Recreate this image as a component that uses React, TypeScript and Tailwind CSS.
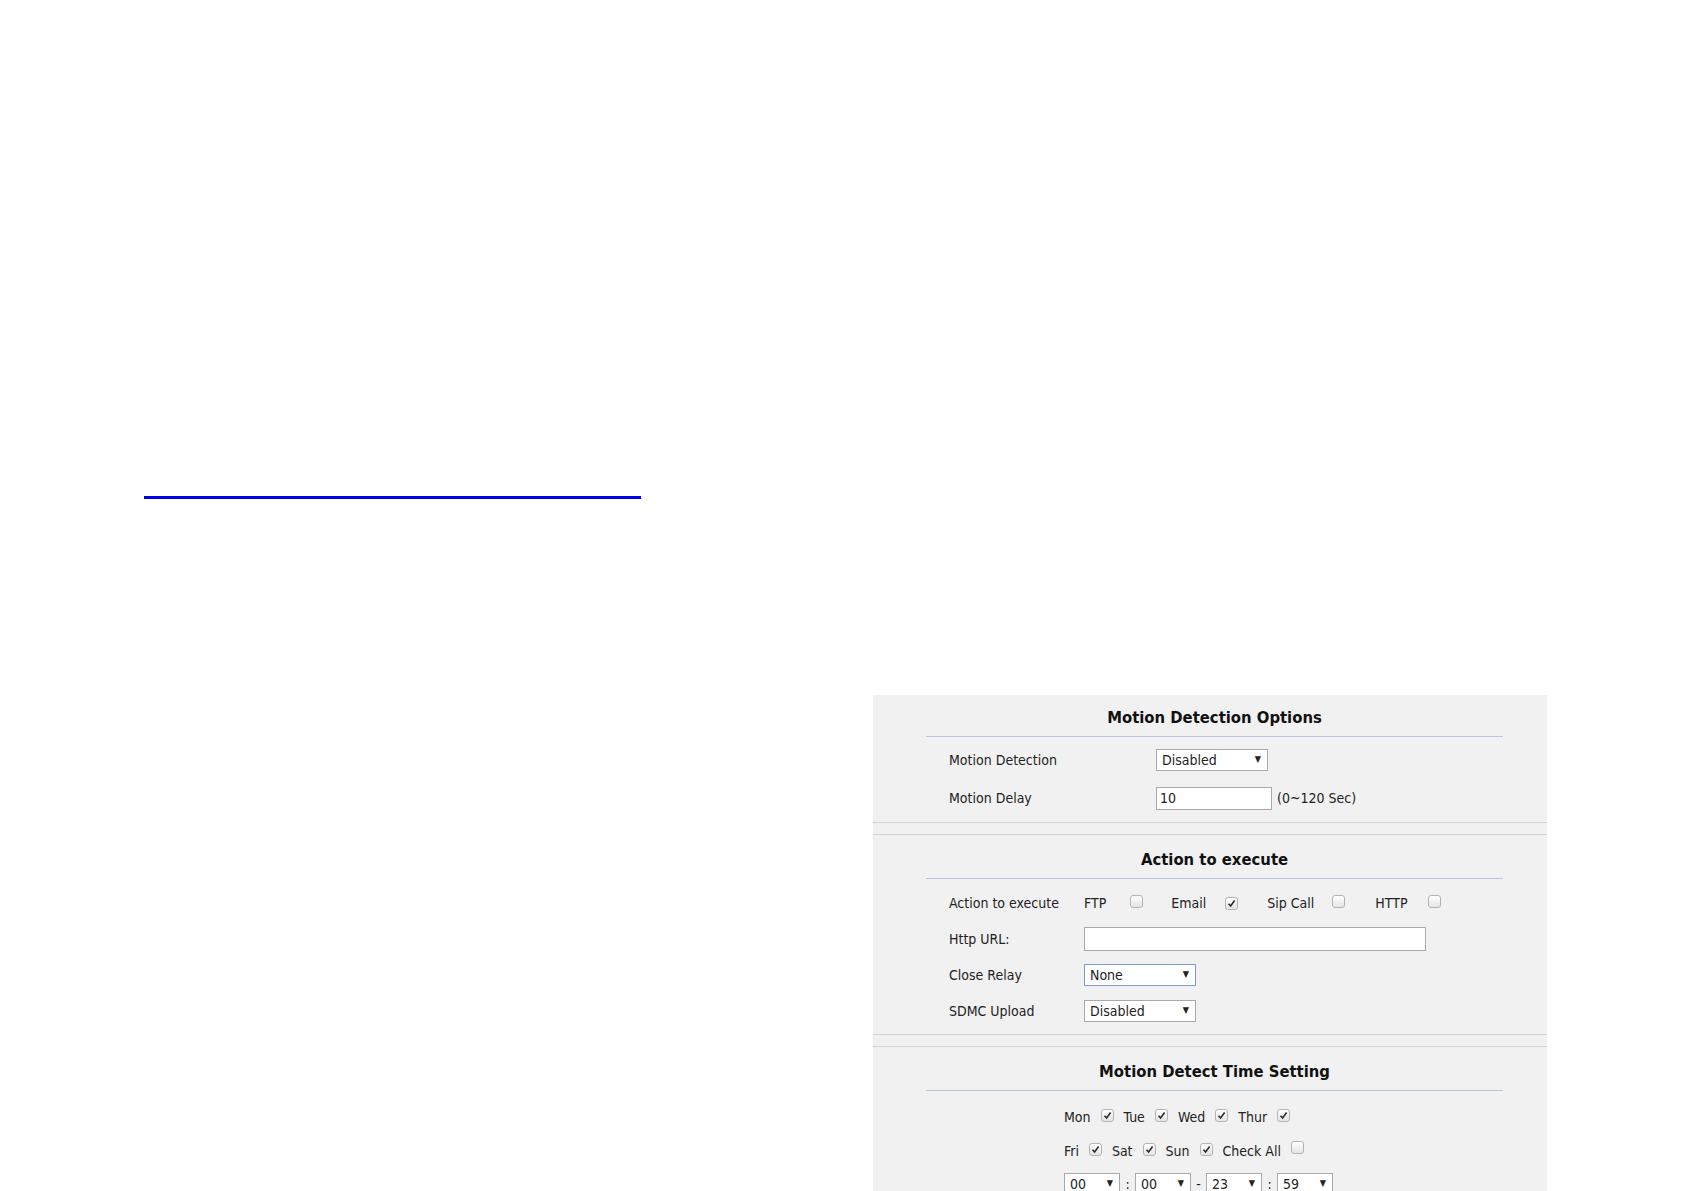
const font = { fontFamily: '"DejaVu Sans Condensed", "Liberation Sans", Arial, sans-serif' }

const Check = ({ checked = false }: { checked?: boolean }) => (
  <span className="inline-flex h-[13px] w-[13px] items-center justify-center rounded-[3px] border border-[#b4b4b4] bg-gradient-to-b from-white to-[#e4e4e4]">
    {checked && (
      <svg width="9" height="9" viewBox="0 0 9 9">
        <path d="M1.5 4.8 L3.6 7 L7.6 1.6" fill="none" stroke="#2b2b2b" strokeWidth="1.6" />
      </svg>
    )}
  </span>
)

const Select = ({ value, width, focus = false }: { value: string; width: string; focus?: boolean }) => (
  <div
    className={`flex h-[22px] items-center justify-between bg-white pl-[5px] pr-[6px] text-[14px] text-[#222] border ${
      focus ? 'border-[#7d9bd0]' : 'border-[#a9a9a9]'
    } ${width}`}
  >
    <span>{value}</span>
    <span className="text-[9px] text-[#222]">▼</span>
  </div>
)

const Heading = ({ title }: { title: string }) => (
  <div className="ml-[53px] mr-[44px]">
    <div className="flex h-[22px] items-center justify-center text-[16.5px] font-bold text-[#111]">{title}</div>
    <div className="mt-[7px] h-px bg-[#b8c8da]" />
  </div>
)

const Row = ({ label, labelW, h, children }: { label: string; labelW: string; h: string; children?: React.ReactNode }) => (
  <div className={`flex items-center pl-[76px] ${h}`}>
    <div className={`${labelW} text-[14px] text-[#222]`}>{label}</div>
    {children}
  </div>
)

export default function App() {
  return (
    <div className="h-[1191px] w-full overflow-hidden bg-white" style={font}>
      <div className="pt-[496px]">
        <div className="ml-[144px] h-[3px] w-[497px] bg-[#0000ee]" />
      </div>

      <div className="ml-[873px] mt-[196px] w-[674px] bg-[#f1f1f1] pb-[40px]">
        {/* Motion Detection Options */}
        <div className="border-b border-[#d3d3d3] pt-[12px] pb-[5px]">
          <Heading title="Motion Detection Options" />
          <div className="mt-[4px]">
            <Row label="Motion Detection" labelW="w-[207px]" h="h-[38px]">
              <Select value="Disabled" width="w-[112px]" />
            </Row>
            <Row label="Motion Delay" labelW="w-[207px]" h="h-[38px]">
              <div className="flex h-[23px] w-[116px] items-center border border-[#a9a9a9] bg-white pl-[3px] text-[14px] text-[#222]">
                10
              </div>
              <span className="ml-[5px] text-[14px] text-[#222]">(0~120 Sec)</span>
            </Row>
          </div>
        </div>

        {/* Action to execute */}
        <div className="mt-[11px] border-y border-[#d3d3d3] pt-[14px] pb-[5px]">
          <Heading title="Action to execute" />
          <div className="mt-[6px]">
            <Row label="Action to execute" labelW="w-[135px]" h="h-[36px]">
              <div className="flex items-center text-[14px] text-[#222]">
                <span>FTP</span>
                <span className="ml-[24px]"><Check /></span>
                <span className="ml-[28px]">Email</span>
                <span className="ml-[19px]"><Check checked /></span>
                <span className="ml-[29px]">Sip Call</span>
                <span className="ml-[18px]"><Check /></span>
                <span className="ml-[30px]">HTTP</span>
                <span className="ml-[21px]"><Check /></span>
              </div>
            </Row>
            <Row label="Http URL:" labelW="w-[135px]" h="h-[36px]">
              <div className="h-[24px] w-[342px] border border-[#a9a9a9] bg-white" />
            </Row>
            <Row label="Close Relay" labelW="w-[135px]" h="h-[36px]">
              <Select value="None" width="w-[112px]" focus />
            </Row>
            <Row label="SDMC Upload" labelW="w-[135px]" h="h-[36px]">
              <Select value="Disabled" width="w-[112px]" />
            </Row>
          </div>
        </div>

        {/* Motion Detect Time Setting */}
        <div className="mt-[11px] border-t border-[#d3d3d3] pt-[14px]">
          <Heading title="Motion Detect Time Setting" />
          <div className="mt-[9px] pl-[191px] text-[14px] text-[#222]">
            <div className="flex h-[34px] items-center gap-[10px]">
              <span>Mon</span>
              <span className="-mt-[4px]"><Check checked /></span>
              <span>Tue</span>
              <span className="-mt-[4px]"><Check checked /></span>
              <span>Wed</span>
              <span className="-mt-[4px]"><Check checked /></span>
              <span>Thur</span>
              <span className="-mt-[4px]"><Check checked /></span>
            </div>
            <div className="flex h-[34px] items-center gap-[10px]">
              <span>Fri</span>
              <span className="-mt-[4px]"><Check checked /></span>
              <span>Sat</span>
              <span className="-mt-[4px]"><Check checked /></span>
              <span>Sun</span>
              <span className="-mt-[4px]"><Check checked /></span>
              <span>Check All</span>
              <span className="-mt-[4px]"><Check /></span>
            </div>
            <div className="flex h-[32px] items-center">
              <Select value="00" width="w-[56px]" />
              <span className="w-[15px] text-center">:</span>
              <Select value="00" width="w-[56px]" />
              <span className="w-[15px] text-center">-</span>
              <Select value="23" width="w-[56px]" />
              <span className="w-[15px] text-center">:</span>
              <Select value="59" width="w-[56px]" />
            </div>
          </div>
        </div>
      </div>
    </div>
  )
}
